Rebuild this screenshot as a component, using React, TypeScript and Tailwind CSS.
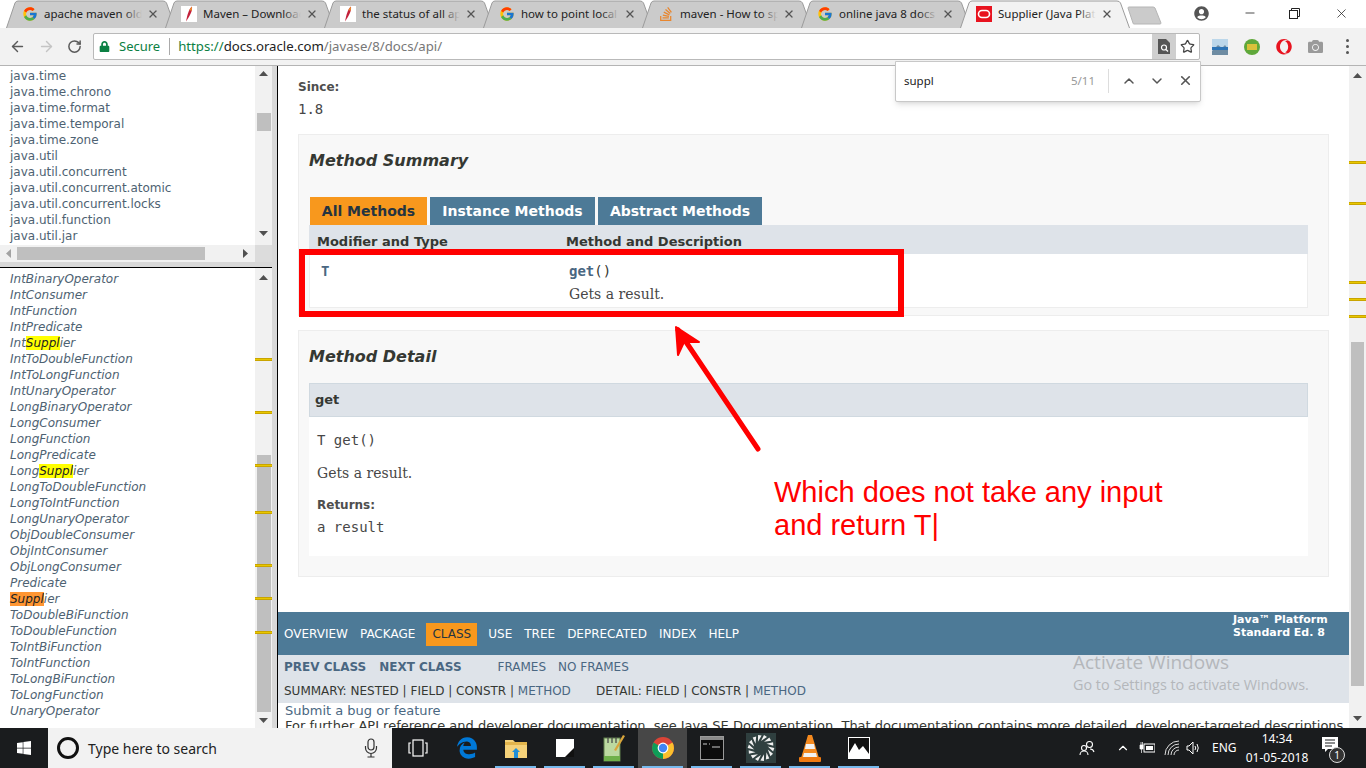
import { ArrowLeft, ArrowRight, RotateCw, Star, X, ChevronUp, ChevronDown, Minus } from "lucide-react";
import { FcGoogle } from "react-icons/fc";
import { FaStackOverflow, FaWindows, FaEdgeLegacy, FaOpera, FaCamera, FaUserCircle, FaLock } from "react-icons/fa";

const tabs = [
  { title: "apache maven old versions", icon: "google" },
  { title: "Maven – Download Apache", icon: "maven" },
  { title: "the status of all apache", icon: "maven" },
  { title: "how to point local maven", icon: "google" },
  { title: "maven - How to specify", icon: "so" },
  { title: "online java 8 docs - Google", icon: "google" },
  { title: "Supplier (Java Platform SE 8)", icon: "oracle", active: true },
];

const packages = [
  "java.time", "java.time.chrono", "java.time.format", "java.time.temporal", "java.time.zone", "java.util",
  "java.util.concurrent", "java.util.concurrent.atomic", "java.util.concurrent.locks", "java.util.function", "java.util.jar",
];

const classes = [
  "IntBinaryOperator", "IntConsumer", "IntFunction", "IntPredicate", "IntSupplier", "IntToDoubleFunction", "IntToLongFunction",
  "IntUnaryOperator", "LongBinaryOperator", "LongConsumer", "LongFunction", "LongPredicate", "LongSupplier", "LongToDoubleFunction",
  "LongToIntFunction", "LongUnaryOperator", "ObjDoubleConsumer", "ObjIntConsumer", "ObjLongConsumer", "Predicate", "Supplier",
  "ToDoubleBiFunction", "ToDoubleFunction", "ToIntBiFunction", "ToIntFunction", "ToLongBiFunction", "ToLongFunction", "UnaryOperator",
];

const leftTicks = [91, 144, 197, 244, 297, 330, 364];
const rightTicks = [95, 136, 215, 232, 249];

function TabIcon({ icon }: { icon: string }) {
  if (icon === "google") return <FcGoogle size={16} />;
  if (icon === "so") return <FaStackOverflow size={16} className="text-[#e8862e]" />;
  if (icon === "maven")
    return (
      <svg width="16" height="16" viewBox="0 0 16 16">
        <rect width="16" height="16" fill="#fff" />
        <path d="M11 0.5C8 3 6.5 8 5 15.5C7.5 12 9.5 8 10.5 5.5C11 4 11.2 2 11 0.5Z" fill="#c3203b" />
        <path d="M11 0.5C9.8 1.5 9 2.8 8.3 4.3L10.7 4.8C11 3.5 11.2 2 11 0.5Z" fill="#e8862e" />
      </svg>
    );
  return (
    <svg width="16" height="16" viewBox="0 0 16 16">
      <rect width="16" height="16" fill="#e8131f" />
      <rect x="2.5" y="4.5" width="11" height="7" rx="3.5" fill="none" stroke="#fff" strokeWidth="1.6" />
    </svg>
  );
}

function Tab({ title, icon, active }: { title: string; icon: string; active?: boolean }) {
  return (
    <div className={`relative w-[170px] h-[28px] shrink-0 mr-[-11px] flex items-center ${active ? "z-10" : ""}`}>
      <svg width="170" height="28" viewBox="0 0 170 28" className="absolute inset-0">
        <path
          d="M0.5 28 L9 3 Q9.8 1 12 1 L157 1 Q159.5 1 160.5 3 L169.5 28"
          fill={active ? "#f2f2f2" : "#cbcbcb"}
          stroke="#9b9b9b"
          strokeWidth="1"
        />
      </svg>
      <div className="relative ml-[16px] w-[16px] h-[16px]">
        <TabIcon icon={icon} />
      </div>
      <div className="relative ml-[6px] w-[98px] overflow-hidden whitespace-nowrap text-[11.5px] text-[#222] font-['Noto_Sans',sans-serif]">
        {title}
        <span
          className={`absolute right-0 top-0 bottom-0 w-[18px] bg-gradient-to-r from-transparent ${active ? "to-[#f2f2f2]" : "to-[#cbcbcb]"}`}
        />
      </div>
      <X size={12} strokeWidth={2.6} className="relative ml-[5px] text-[#555]" />
    </div>
  );
}

function ClassName({ name }: { name: string }) {
  const at = name.indexOf("Suppl");
  if (at < 0) return <>{name}</>;
  const current = name === "Supplier";
  return (
    <>
      {name.slice(0, at)}
      <span className={`text-[#222] ${current ? "bg-[#ff9632]" : "bg-[#ffff00]"}`}>Suppl</span>
      {name.slice(at + 5)}
    </>
  );
}

function Triangle({ up, className }: { up?: boolean; className?: string }) {
  return (
    <svg width="9" height="5" viewBox="0 0 9 5" className={className}>
      <path d={up ? "M0 5 L4.5 0 L9 5 Z" : "M0 0 L4.5 5 L9 0 Z"} fill="#505050" />
    </svg>
  );
}

function Tick({ top }: { top: number }) {
  return (
    <div className="absolute left-0 right-0 h-[3px] bg-[#e8c800] border-y border-[#c9a400]" style={{ top }} />
  );
}

function Sidebar() {
  return (
    <div className="w-[272px] shrink-0 flex flex-col h-full font-['DejaVu_Sans',sans-serif] text-[12px] text-[#4e6272]">
      {/* package frame */}
      <div className="h-[196px] flex flex-col bg-white overflow-hidden">
        <div className="h-[179px] flex">
          <div className="flex-1 pl-[10px] pt-[2px] overflow-hidden">
            {packages.map((p) => (
              <div key={p} className="h-[16px] leading-[16px] whitespace-nowrap">
                {p}
              </div>
            ))}
          </div>
          <div className="w-[17px] bg-[#f1f1f1] flex flex-col items-center">
            <Triangle up className="mt-[5px]" />
            <div className="w-[14px] h-[18px] bg-[#bfbfbf] mt-[37px]" />
            <Triangle className="mt-[100px]" />
          </div>
        </div>
        <div className="h-[17px] bg-[#f1f1f1] flex items-center">
          <svg width="5" height="9" viewBox="0 0 5 9" className="ml-[6px]">
            <path d="M5 0 L0 4.5 L5 9 Z" fill="#a3a3a3" />
          </svg>
          <div className="w-[188px] h-[13px] bg-[#bfbfbf] ml-[6px]" />
          <svg width="5" height="9" viewBox="0 0 5 9" className="ml-[38px]">
            <path d="M0 0 L5 4.5 L0 9 Z" fill="#505050" />
          </svg>
          <div className="ml-auto w-[17px] h-full bg-[#dcdcdc]" />
        </div>
      </div>
      <div className="h-[5px] bg-[#d8d8d8] border-b border-black box-content" />
      {/* class frame */}
      <div className="flex-1 flex bg-white overflow-hidden">
        <div className="flex-1 pl-[10px] pt-[3px] italic overflow-hidden">
          {classes.map((c) => (
            <div key={c} className="h-[16px] leading-[16px] whitespace-nowrap">
              <ClassName name={c} />
            </div>
          ))}
        </div>
        <div className="relative w-[17px] bg-[#f1f1f1] flex flex-col items-center">
          <Triangle up className="mt-[7px]" />
          <div className="w-[14px] h-[257px] bg-[#bfbfbf] mt-[175px]" />
          <Triangle className="mt-[6px]" />
          {leftTicks.map((t) => (
            <Tick key={t} top={t - 1} />
          ))}
        </div>
      </div>
    </div>
  );
}

function Article() {
  return (
    <div className="flex-1 min-w-0 bg-white overflow-hidden font-['DejaVu_Sans',sans-serif] text-[#353833]">
      <div className="px-[20px]">
        <div className="pt-[13px] h-[29px] text-[12px] leading-[16px] font-bold text-[#4e4e4e]">Since:</div>
        <div className="h-[39px] pt-[6px] font-['DejaVu_Sans_Mono',monospace] text-[14px] leading-[16px] text-[#474747]">1.8</div>

        <div className="h-[182px] bg-[#f8f8f8] border border-[#ededed] pl-[10px] pr-[20px]">
          <div className="h-[62px] pt-[16px] text-[16px] leading-[20px] font-bold italic text-[#353833]">Method Summary</div>
          <div className="flex pl-[1px] gap-[3px] h-[28px] text-[14px] font-bold">
            <div className="w-[117px] bg-[#f8981d] text-[#253441] flex items-center justify-center">All Methods</div>
            <div className="w-[165px] bg-[#4d7a97] text-white flex items-center justify-center">Instance Methods</div>
            <div className="w-[164px] bg-[#4d7a97] text-white flex items-center justify-center">Abstract Methods</div>
          </div>
          <div className="h-[29px] bg-[#dee3e9] flex pt-[9px] text-[13px] leading-[16px] font-bold">
            <div className="w-[257px] pl-[8px]">Modifier and Type</div>
            <div>Method and Description</div>
          </div>
          <div className="h-[54px] bg-white border-x border-b border-[#ededed] flex pt-[9px]">
            <div className="w-[259px] pl-[11px] font-['DejaVu_Sans_Mono',monospace] text-[14px] leading-[16px] font-bold text-[#4a6782]">T</div>
            <div>
              <div className="font-['DejaVu_Sans_Mono',monospace] text-[14px] leading-[16px] text-[#353833]">
                <span className="font-bold text-[#4a6782]">get</span>()
              </div>
              <div className="mt-[7px] font-['DejaVu_Serif',serif] text-[14px] leading-[16px] text-[#474747]">Gets a result.</div>
            </div>
          </div>
        </div>

        <div className="mt-[14px] h-[247px] bg-[#f8f8f8] border border-[#ededed] pl-[10px] pr-[20px]">
          <div className="h-[52px] pt-[16px] text-[16px] leading-[20px] font-bold italic">Method Detail</div>
          <div className="h-[34px] bg-[#dee3e9] border border-[#d0d9e0] pl-[5px] flex items-center text-[13px] font-bold">get</div>
          <div className="h-[139px] bg-white pl-[8px]">
            <div className="pt-[15px] font-['DejaVu_Sans_Mono',monospace] text-[14px] leading-[16px] text-[#474747]">T get()</div>
            <div className="mt-[17px] font-['DejaVu_Serif',serif] text-[14px] leading-[16px] text-[#474747]">Gets a result.</div>
            <div className="mt-[16px] text-[12px] leading-[16px] font-bold text-[#4e4e4e]">Returns:</div>
            <div className="mt-[6px] font-['DejaVu_Sans_Mono',monospace] text-[14px] leading-[16px] text-[#474747]">a result</div>
          </div>
        </div>
      </div>

      <div className="mt-[35px] h-[43px] bg-[#4d7a97] flex items-center pl-[6px] text-[12px] text-white relative">
        <span>OVERVIEW</span>
        <span className="ml-[12px]">PACKAGE</span>
        <span className="ml-[11px] h-[23px] w-[51px] bg-[#f8981d] text-[#253441] flex items-center justify-center mt-[1px]">CLASS</span>
        <span className="ml-[11px]">USE</span>
        <span className="ml-[12px]">TREE</span>
        <span className="ml-[12px]">DEPRECATED</span>
        <span className="ml-[12px]">INDEX</span>
        <span className="ml-[12px]">HELP</span>
        <div className="absolute left-[955px] top-[0px] text-[11px] leading-[13px] font-bold pt-[1px]">
          <div>Java™ Platform</div>
          <div>Standard Ed. 8</div>
        </div>
      </div>
      <div className="h-[48px] bg-[#dee3e9] pl-[6px] text-[12px] text-[#353833]">
        <div className="h-[21px] flex items-end">
          <span className="font-bold text-[#4a6782]">PREV CLASS</span>
          <span className="ml-[13px] font-bold text-[#4a6782]">NEXT CLASS</span>
          <span className="ml-[36px] text-[#4a6782]">FRAMES</span>
          <span className="ml-[12px] text-[#4a6782]">NO FRAMES</span>
        </div>
        <div className="mt-[6px] flex">
          <div className="w-[312px] whitespace-nowrap">
            SUMMARY: NESTED | FIELD | CONSTR | <span className="text-[#4a6782]">METHOD</span>
          </div>
          <div className="whitespace-nowrap">
            DETAIL: FIELD | CONSTR | <span className="text-[#4a6782]">METHOD</span>
          </div>
        </div>
      </div>
      <div className="pl-[7px] text-[13px] leading-[15px] whitespace-nowrap">
        <div className="text-[#4a6782]">Submit a bug or feature</div>
        <div>
          For further API reference and developer documentation, see Java SE Documentation. That documentation contains more detailed, developer-targeted descriptions
        </div>
      </div>
    </div>
  );
}

function ChromeLogo() {
  return (
    <svg width="24" height="24" viewBox="0 0 24 24">
      <circle cx="12" cy="12" r="11" fill="#db4437" />
      <path d="M12 12 L2.5 6.5 A11 11 0 0 0 12 23 Z" fill="#0f9d58" />
      <path d="M12 12 L21.5 6.5 A11 11 0 0 1 12 23 Z" fill="#fbc02d" />
      <circle cx="12" cy="12" r="5.4" fill="#fff" />
      <circle cx="12" cy="12" r="4.2" fill="#4285f4" />
    </svg>
  );
}

function Pinwheel() {
  const spokes = Array.from({ length: 14 }, (_, i) => i * (360 / 14));
  return (
    <svg width="30" height="30" viewBox="0 0 30 30">
      <rect width="30" height="30" fill="#2f3f3f" />
      {spokes.map((a) => (
        <path key={a} d="M15 8 L18 2 L21 4 Z" fill="#f0f0f0" transform={`rotate(${a} 15 15)`} />
      ))}
    </svg>
  );
}

function TaskIcon({ active, running, children }: { active?: boolean; running?: boolean; children: React.ReactNode }) {
  return (
    <div className={`relative w-[49px] h-full flex items-center justify-center ${active ? "bg-[#474747]" : ""}`}>
      {children}
      {running && <div className="absolute bottom-0 left-[4px] right-[4px] h-[2px] bg-[#76b9ed]" />}
    </div>
  );
}

function Taskbar() {
  return (
    <div className="h-[40px] bg-[#1a1c1e] flex items-stretch shrink-0 text-white font-['Noto_Sans',sans-serif]">
      <div className="w-[48px] flex items-center justify-center">
        <FaWindows size={16} className="text-white" />
      </div>
      <div className="w-[344px] bg-[#f2f2f2] flex items-center">
        <div className="ml-[9px] w-[22px] h-[22px] rounded-full border-[3px] border-[#111]" />
        <span className="ml-[9px] text-[14px] text-[#222]">Type here to search</span>
        <svg width="14" height="20" viewBox="0 0 14 20" fill="none" stroke="#333" strokeWidth="1.2" className="ml-auto mr-[14px]">
          <rect x="4" y="1" width="6" height="11" rx="3" />
          <path d="M1.5 8 V10 A5.5 5.5 0 0 0 12.5 10 V8 M7 15.5 V19 M3.5 19 H10.5" />
        </svg>
      </div>
      <div className="ml-[1px] flex h-full">
        <TaskIcon>
          <svg width="20" height="18" viewBox="0 0 20 18" fill="none" stroke="#fff" strokeWidth="1.2">
            <rect x="5" y="1" width="10" height="16" />
            <path d="M3 4 H1 V14 H3 M17 4 H19 V14 H17" />
          </svg>
        </TaskIcon>
        <TaskIcon>
          <FaEdgeLegacy size={22} className="text-[#0078d7]" />
        </TaskIcon>
        <TaskIcon running>
          <svg width="24" height="22" viewBox="0 0 24 22">
            <path d="M1 3 H9 L11 5 H23 V21 H1 Z" fill="#f5d27a" />
            <rect x="1" y="5" width="22" height="3" fill="#e3b54c" />
            <path d="M8 15 L12 11 L16 15 H14 V21 H10 V15 Z" fill="#1f8fd8" />
          </svg>
        </TaskIcon>
        <TaskIcon running>
          <svg width="18" height="18" viewBox="0 0 18 18">
            <rect width="18" height="18" fill="#fff" />
            <path d="M18 9 V18 H9 Z" fill="#111" />
          </svg>
        </TaskIcon>
        <TaskIcon running>
          <svg width="24" height="28" viewBox="0 0 24 28">
            <rect x="2" y="4" width="16" height="23" fill="#bcd9a0" stroke="#5f7f4a" />
            <rect x="2" y="22" width="16" height="5" fill="#6fb04a" />
            <path d="M6 3 V9 M10 3 V9 M14 3 V9" stroke="#444" strokeWidth="1.2" />
            <path d="M21 1 L23 2 L14 17 L12 16 Z" fill="#d9a53c" />
          </svg>
        </TaskIcon>
        <TaskIcon active running>
          <ChromeLogo />
        </TaskIcon>
        <TaskIcon running>
          <svg width="24" height="24" viewBox="0 0 24 24">
            <rect x="0.5" y="0.5" width="23" height="23" fill="#0c0c0c" stroke="#9a9a9a" />
            <rect x="1" y="1" width="22" height="3" fill="#8a8a8a" />
            <path d="M3 8 H7 M9 8 H10 M12 11 H20" stroke="#ccc" strokeWidth="1.2" />
          </svg>
        </TaskIcon>
        <TaskIcon running>
          <Pinwheel />
        </TaskIcon>
        <TaskIcon running>
          <svg width="22" height="28" viewBox="0 0 22 28">
            <path d="M9 1 H13 L20 24 H2 Z" fill="#f58a1f" />
            <path d="M7 10 H15 L16 15 H6 Z" fill="#f2f2f2" />
            <path d="M5 19 H17 L18 23 H4 Z" fill="#f2f2f2" />
            <rect x="0" y="23" width="22" height="5" rx="1" fill="#f07a10" />
          </svg>
        </TaskIcon>
        <TaskIcon running>
          <svg width="22" height="22" viewBox="0 0 22 22">
            <rect width="22" height="22" fill="#fff" />
            <rect x="1" y="1" width="20" height="20" fill="#111" />
            <path d="M1 21 V16 L7 6 L11 13 L15 9 L21 17 V21 Z" fill="#fff" />
          </svg>
        </TaskIcon>
      </div>
      <div className="ml-auto pr-[22px] flex items-center">
        <svg width="16" height="16" viewBox="0 0 16 16" fill="none" stroke="#fff" strokeWidth="1.1">
          <circle cx="10.5" cy="4.5" r="3" />
          <circle cx="5" cy="8" r="2.5" />
          <path d="M1 15 A4 4 0 0 1 9 15 M11 9 A4 4 0 0 1 15 12" />
        </svg>
        <ChevronUp size={14} className="ml-[21px] text-white" />
        <svg width="16" height="12" viewBox="0 0 16 12" className="ml-[9px]" fill="#fff">
          <rect x="5" y="2" width="11" height="8" fill="none" stroke="#fff" />
          <rect x="7" y="4" width="7" height="4" />
          <path d="M1 3 H4 V7 H1 Z M2 0 V3 M3.5 0 V3 M2.5 7 V11" stroke="#fff" strokeWidth="0.7" />
        </svg>
        <svg width="16" height="16" viewBox="0 0 16 16" className="ml-[9px]" fill="none" stroke="#ddd" strokeWidth="1">
          <path d="M1 15 A14 14 0 0 1 15 1 M4 15 A11 11 0 0 1 15 4 M7 15 A8 8 0 0 1 15 7 M10 15 A5 5 0 0 1 15 10" />
        </svg>
        <svg width="14" height="16" viewBox="0 0 14 16" className="ml-[6px]" fill="none" stroke="#fff" strokeWidth="1">
          <path d="M1 6 H3 L7 2 V14 L3 10 H1 Z M9 6 Q10.5 8 9 10 M11 4 Q13.5 8 11 12" />
        </svg>
        <span className="ml-[12px] w-[24px] text-[12px]">ENG</span>
        <div className="ml-[9px] w-[64px] text-center text-[12px] leading-[19px]">
          <div>14:34</div>
          <div>01-05-2018</div>
        </div>
        <div className="relative ml-[13px] w-[22px] h-[40px] flex items-center">
          <svg width="16" height="15" viewBox="0 0 16 15" className="mt-[-8px]">
            <path d="M0 0 H16 V12 H6 L3 15 V12 H0 Z" fill="#fff" />
            <path d="M3 3 H13 M3 6 H13 M3 9 H10" stroke="#1a1c1e" strokeWidth="1" />
          </svg>
          <div className="absolute left-[7px] top-[19px] w-[16px] h-[16px] rounded-full border border-[#ddd] bg-[#333] flex items-center justify-center text-[10px] leading-none">1</div>
        </div>
      </div>
    </div>
  );
}

export default function App() {
  return (
    <div className="relative w-[1366px] h-[768px] overflow-hidden flex flex-col bg-white">
      {/* tab strip */}
      <div className="h-[28px] bg-white flex pl-[6px] relative shrink-0">
        {tabs.map((t) => (
          <Tab key={t.title} title={t.title} icon={t.icon} active={t.active} />
        ))}
        <svg width="36" height="20" viewBox="0 0 36 20" className="ml-[8px] mt-[6px] shrink-0">
          <path d="M1 2 Q1 1 2 1 L26 1 Q27 1 28 2 L34 17 Q34 18 33 18 L7 18 Q6 18 6 17 Z" fill="#cbcbcb" stroke="#b5b5b5" />
        </svg>
        <div className="ml-auto flex items-center h-[26px] text-[#444]">
          <FaUserCircle size={15} className="text-[#555] mr-[34px]" />
          <Minus size={14} strokeWidth={1.4} className="text-[#222] mr-[32px]" />
          <svg width="11" height="11" viewBox="0 0 11 11" fill="none" stroke="#222" className="mr-[34px]">
            <rect x="0.5" y="2.5" width="8" height="8" />
            <path d="M2.5 2.5 V0.5 H10.5 V8.5 H8.5" />
          </svg>
          <X size={15} strokeWidth={1.2} className="text-[#222] mr-[17px]" />
        </div>
      </div>
      {/* toolbar */}
      <div className="h-[38px] bg-[#f2f2f2] border-b border-[#b4b4b4] flex items-start pt-[5px] relative z-20 shrink-0">
        <div className="flex items-center h-[27px]">
          <ArrowLeft size={17} className="ml-[9px] text-[#5a5a5a]" />
          <ArrowRight size={17} className="ml-[12px] text-[#c4c4c4]" />
          <RotateCw size={15} strokeWidth={2.4} className="ml-[12px] text-[#5a5a5a]" />
        </div>
        <div className="ml-[11px] w-[1107px] h-[27px] bg-white border border-[#b9b9b9] rounded-[2px] flex items-center text-[13.2px] font-['Noto_Sans',sans-serif] whitespace-nowrap">
          <FaLock size={11} className="ml-[5px] text-[#0b8043]" />
          <span className="ml-[9px] text-[13px] text-[#0b8043]">Secure</span>
          <div className="ml-[9px] w-[1px] h-[17px] bg-[#aaa]" />
          <span className="ml-[8px] text-[#0b8043]">https://</span>
          <span className="text-[#222]">docs.oracle.com</span>
          <span className="text-[#777]">/javase/8/docs/api/</span>
          <div className="ml-auto w-[24px] h-[25px] bg-[#cfcfcf] flex items-center justify-center">
            <svg width="12" height="15" viewBox="0 0 12 15">
              <path d="M0 0 H8 L12 4 V15 H0 Z" fill="#555" />
              <circle cx="6" cy="8.5" r="2.5" fill="none" stroke="#fff" strokeWidth="1.2" />
              <path d="M8 10.5 L10 12.5" stroke="#fff" strokeWidth="1.2" />
            </svg>
          </div>
          <Star size={15} strokeWidth={2} className="mx-[4px] text-[#444]" />
        </div>
        <div className="ml-[12px] flex items-center h-[27px]">
          <svg width="16" height="16" viewBox="0 0 16 16">
            <rect width="16" height="16" fill="#bcd7ea" />
            <path d="M0 12 L6 6 L10 9 L13 6 L16 10 V16 H0 Z" fill="#6e8ca3" />
            <rect y="8" width="16" height="3" fill="#2d74b5" />
          </svg>
          <div className="ml-[16px] w-[16px] h-[16px] rounded-full bg-[#5fa83a] flex items-center justify-center">
            <div className="w-[10px] h-[6px] bg-[#d9c13a]" />
          </div>
          <FaOpera size={16} className="ml-[16px] text-[#e8131f]" />
          <FaCamera size={15} className="ml-[16px] text-[#9a9a9a]" />
          <div className="ml-[23px] flex flex-col gap-[3px]">
            <div className="w-[3px] h-[3px] rounded-full bg-[#555]" />
            <div className="w-[3px] h-[3px] rounded-full bg-[#555]" />
            <div className="w-[3px] h-[3px] rounded-full bg-[#555]" />
          </div>
        </div>
      </div>
      {/* page */}
      <div className="flex-1 min-h-0 flex">
        <Sidebar />
        <div className="w-[5px] shrink-0 bg-[#d8d8d8]" />
        <div className="w-[1px] shrink-0 bg-black" />
        <Article />
        <div className="relative w-[17px] shrink-0 bg-[#f1f1f1] flex flex-col items-center">
          <Triangle up className="mt-[7px]" />
          <div className="w-[13px] h-[344px] bg-[#bfbfbf] mt-[264px]" />
          <Triangle className="mt-[30px]" />
          {rightTicks.map((t) => (
            <Tick key={t} top={t} />
          ))}
        </div>
      </div>
      <Taskbar />

      {/* find bar */}
      <div className="absolute z-30 left-[895px] top-[61px] w-[306px] h-[41px] pb-[2px] bg-white border border-[#c8c8c8] rounded-b-[2px] shadow-md flex items-center font-['Noto_Sans',sans-serif] text-[11.5px]">
        <span className="ml-[8px] text-[#222]">suppl</span>
        <span className="ml-auto text-[#999]">5/11</span>
        <div className="ml-[13px] w-[1px] h-[24px] bg-[#ddd]" />
        <ChevronUp size={16} strokeWidth={2.2} className="ml-[12px] text-[#555]" />
        <ChevronDown size={16} strokeWidth={2.2} className="ml-[12px] text-[#555]" />
        <X size={15} strokeWidth={2.6} className="ml-[13px] mr-[7px] text-[#555]" />
      </div>

      {/* annotations drawn over the screenshot */}
      <div className="absolute z-20 left-[299px] top-[249px] w-[605px] h-[68px] border-[6px] border-[#ff0000]" />
      <svg width="110" height="135" viewBox="0 0 110 135" className="absolute z-20 left-[660px] top-[320px]">
        <path d="M98 129 L18 10" stroke="#ff0000" strokeWidth="5" strokeLinecap="round" />
        <path d="M16 7 L18 35 L24 22 L39 22 Z" fill="#ff0000" stroke="#ff0000" strokeWidth="2" strokeLinejoin="round" />
      </svg>
      <div className="absolute z-20 left-[774px] top-[476px] font-['Liberation_Sans',sans-serif] text-[29px] leading-[33px] text-[#ff0000] whitespace-nowrap">
        <div>Which does not take any input</div>
        <div>and return T|</div>
      </div>
      <div className="absolute z-20 left-[1073px] top-[649px] font-['Open_Sans',sans-serif] text-[#b4b7bb] whitespace-nowrap">
        <div className="text-[19px] leading-[27px]">Activate Windows</div>
        <div className="text-[14.4px] leading-[18px]">Go to Settings to activate Windows.</div>
      </div>
    </div>
  );
}
